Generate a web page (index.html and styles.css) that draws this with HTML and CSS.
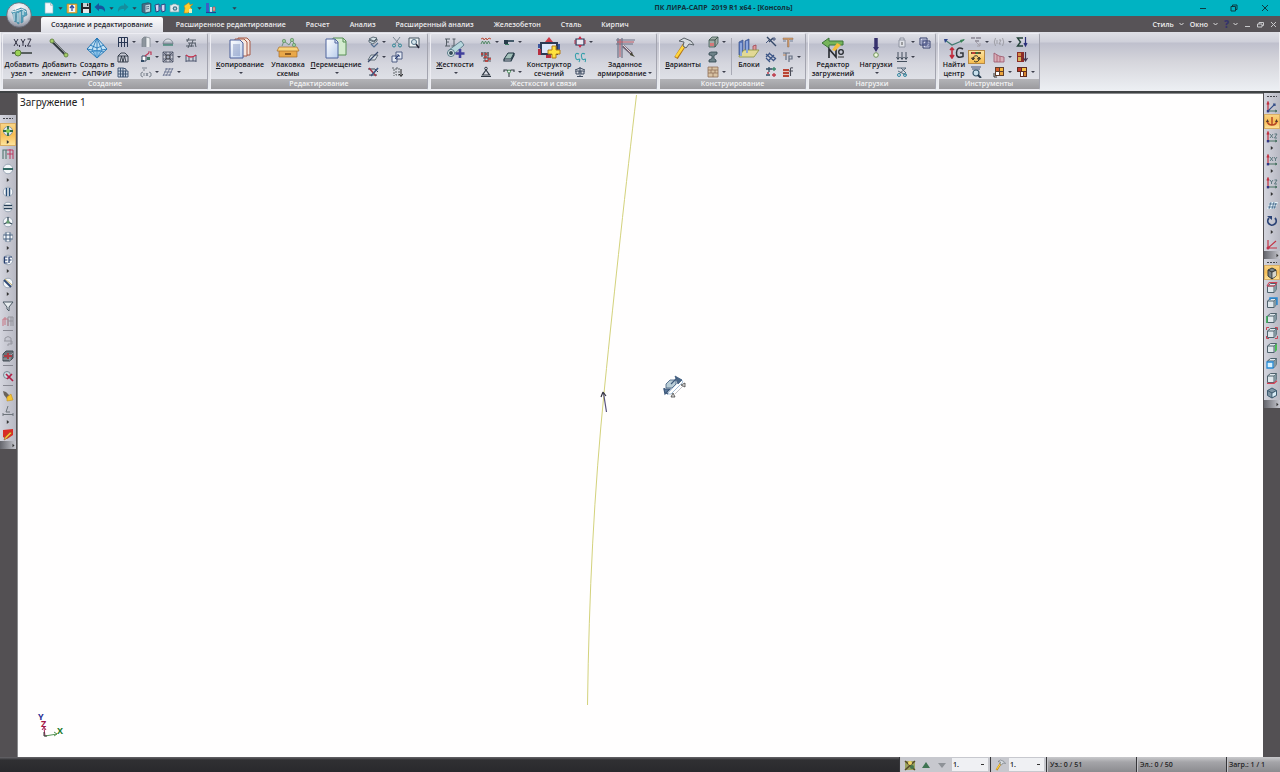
FILE: index.html
```
<!DOCTYPE html>
<html lang="ru">
<head>
<meta charset="utf-8">
<title>ПК ЛИРА-САПР 2019 R1 x64 - [Консоль]</title>
<link rel="stylesheet" href="styles.css">
</head>
<body>
<svg class="sprite" aria-hidden="true">
  <defs>
    <linearGradient id="gy" x1="0" y1="0" x2="0" y2="1"><stop offset="0" stop-color="#fff"/><stop offset="1" stop-color="#8b93a5"/></linearGradient>
    <linearGradient id="gb" x1="0" y1="0" x2="1" y2="1"><stop offset="0" stop-color="#fff"/><stop offset="1" stop-color="#b9cdec"/></linearGradient>
    <radialGradient id="orb" cx=".5" cy=".25" r=".8"><stop offset="0" stop-color="#fff"/><stop offset=".6" stop-color="#ccd0da"/><stop offset="1" stop-color="#7b7f8d"/></radialGradient>
  </defs>
  <symbol id="dd" viewBox="0 0 5 4"><path d="M.8 1h3.4L2.5 3z" fill="#333a4c"/></symbol>
  <symbol id="rt" viewBox="0 0 5 5"><path d="M1.5.8v3.4l2-1.7z" fill="#333"/></symbol>

  <symbol id="page" viewBox="0 0 12 12"><path d="M2 .8h5.8L10 3v8.2H2z" fill="#f4f7fb" stroke="#7fb2bd" stroke-width=".6"/><path d="M7.6.8v2.4H10" fill="none" stroke="#8aa" stroke-width=".7"/></symbol>
  <symbol id="open" viewBox="0 0 12 12"><path d="M1 2h10v9H1z" fill="#e9bd52" stroke="#b97e25" stroke-width=".7"/><path d="M3 3h6v7H3z" fill="#f6f7fb"/><path d="M6 9V4M4 6l2-2.4L8 6" fill="none" stroke="#2d4e9f" stroke-width="1.3"/></symbol>
  <symbol id="save" viewBox="0 0 12 12"><path d="M1 1h10v10H1z" fill="#25272c"/><path d="M3 1h6v4H3z" fill="#c6d2d6"/><path d="M3 7h6v4H3z" fill="#e6e9ec"/><path d="M7 1.5h1.3V4H7z" fill="#222"/></symbol>
  <symbol id="undo" viewBox="0 0 12 12"><path d="M.5 5L5 1v2.400c4.500-.2 6.500 2.200 6 6.600C9.600 7.500 8 7 5 7v2.200z" fill="#17549d"/></symbol>
  <symbol id="redo" viewBox="0 0 12 12"><path d="M11.500 5L7 1v2.400C2.500 3.200.5 5.600 1 10 2.400 7.500 4 7 7 7v2.200z" fill="#158d9d"/></symbol>
  <symbol id="book" viewBox="0 0 12 12"><path d="M2 2l6-1.300 3 1v8L5.500 11.300 2 10z" fill="#476c84" stroke="#29475b" stroke-width=".6"/><path d="M5.500 3.300L10 2.500v7l-4.500.8z" fill="#c2d6df"/><path d="M6 5l3-.6M6 7l3-.6" stroke="#31536b" stroke-width=".7"/></symbol>
  <symbol id="binoc" viewBox="0 0 12 12"><path d="M1 3l4-1v7L2 10zM7 3l4-1v7l-3 1z" fill="#d4d7ef" stroke="#2d4380" stroke-width="1"/><path d="M5 5h3v3H5z" fill="#536aaa"/></symbol>
  <symbol id="camera" viewBox="0 0 12 12"><path d="M2 3h2l1-1h3l1 1h2v7H2z" fill="#e3eaed" stroke="#6e9da8" stroke-width=".7"/><circle cx="7" cy="6.500" r="2.300" fill="#45798e"/><circle cx="7" cy="6.500" r="1" fill="#bfe2ed"/></symbol>
  <symbol id="flash" viewBox="0 0 12 12"><path d="M7 .5L2 4l1 2-1 5h4l4-4-2-2 3-3-3 1z" fill="#ffcd2d" stroke="#c58217" stroke-width=".6"/><path d="M7 7h3v4H7z" fill="#e8eec0"/></symbol>
  <symbol id="chart" viewBox="0 0 12 12"><path d="M1 1h3v9H1z" fill="#3c5fc5"/><path d="M5 5h2v5H5z" fill="#d7dcf1"/><path d="M8 5h2v4H8z" fill="#e3b9bd" stroke="#d14c37" stroke-width=".7"/><path d="M1 10.500h10" stroke="#263f91" stroke-width="1.200"/></symbol>

  <symbol id="frame" viewBox="0 0 12 12"><path d="M1.500 11V1.500h9V11M1.500 6.500h9M4.500 1.500V11M7.500 1.500V11" fill="none" stroke="#283653" stroke-width="1"/></symbol>
  <symbol id="truss" viewBox="0 0 12 12"><path d="M1 11V5L4 2h4l3 3v6zM1 5h10M3 11l1.500-6L6 11l1.500-6L9 11" fill="none" stroke="#2b3441" stroke-width=".9"/></symbol>
  <symbol id="building" viewBox="0 0 12 12"><path d="M1 2h5v9H1zM6 5h5v6H6zM1 5h5M1 8h10M3.500 2v9M8.500 5v6" fill="#c8d3e3" stroke="#38506f" stroke-width=".9"/><path d="M6 2l3 1v2" fill="none" stroke="#38506f"/></symbol>
  <symbol id="wall" viewBox="0 0 12 12"><path d="M2 3l2-2h2v10H2z" fill="#8d959d"/><path d="M6 1l4 1v9H6z" fill="#eceef0"/><path d="M2 3l2-2h2l4 1v9M2 3v8M6 1v10" fill="none" stroke="#777f87" stroke-width=".7"/></symbol>
  <symbol id="nodes" viewBox="0 0 12 12"><path d="M2 5h4v5H2z" fill="#fff" stroke="#32465c"/><path d="M7 6h3v3H7z" fill="#457866"/><path d="M5 5l4-3M8 1h3v3" fill="none" stroke="#bd3a57" stroke-width="1.200"/><path d="M1 9h3v2H1z" fill="#304a65"/></symbol>
  <symbol id="fx" viewBox="0 0 12 12"><path d="M2 2h5M3 4h2M3 6L1 7v3l2 1M9 6l2 1v3l-2 1M4 7v3M6 7l2 3M8 7l-2 3" fill="none" stroke="#737b87" stroke-width=".9"/></symbol>
  <symbol id="dome" viewBox="0 0 12 12"><path d="M1 8a5 5 0 0 1 10 0z" fill="url(#gy)" stroke="#65717c" stroke-width=".7"/><path d="M1 9h10" stroke="#37836f" stroke-width="1.300"/></symbol>
  <symbol id="mesh" viewBox="0 0 12 12"><path d="M1 1h10v10H1zM1 4h10M1 8h10M4 1v10M8 1v10M1 1l10 10M11 1L1 11" fill="none" stroke="#40475c" stroke-width=".8"/><circle cx="6" cy="6" r="2" fill="#a6adbf" stroke="#333" stroke-width=".8"/></symbol>
  <symbol id="slope" viewBox="0 0 12 12"><path d="M3 3h8M2 6h8M1 9h8M5 2L1 10M8 2L4 10M11 2L7 10" stroke="#66708d" stroke-width=".8"/></symbol>
  <symbol id="beam" viewBox="0 0 12 12"><path d="M1 3h10M3 6h8M1 9h8M4 1L2 5M8 3L6 10M5 6L3 11M10 6l1 4" fill="none" stroke="#4b525e" stroke-width=".9"/></symbol>
  <symbol id="span" viewBox="0 0 12 12"><path d="M1 10V3M11 10V3M1 9h10M4 9V5M8 9V5" stroke="#4e5970"/><path d="M1 3q5 4 10 0" fill="none" stroke="#c62e4b" stroke-width="1.300"/></symbol>

  <symbol id="layers" viewBox="0 0 12 12"><path d="M2 3l4-2 4 1-3 3zM2 4l5 2 3-3v2L6 8 2 6z" fill="#d6e2e7" stroke="#40505d" stroke-width=".8"/><path d="M4 8l3 3 4-4" fill="none" stroke="#526f92" stroke-width="1.200"/></symbol>
  <symbol id="cutplane" viewBox="0 0 12 12"><path d="M1 9l3-5h7L8 9z" fill="#dae1e8" stroke="#56636c" stroke-width=".9"/><path d="M1 11L11 1" stroke="#37486a" stroke-width="1.200"/></symbol>
  <symbol id="cross" viewBox="0 0 12 12"><path d="M1 3h7l3 3M2 9h8" fill="none" stroke="#3a4250"/><path d="M2 2l7 8" stroke="#a43648" stroke-width="1.500"/><path d="M11 2L4 10" stroke="#3c5680" stroke-width="1.700"/></symbol>
  <symbol id="scissors" viewBox="0 0 12 12"><path d="M2 1l6 7M9 1L4 8" stroke="#7a8794"/><circle cx="3" cy="9.500" r="1.500" fill="none" stroke="#298694"/><circle cx="9" cy="9.500" r="1.500" fill="none" stroke="#298694"/></symbol>
  <symbol id="resize" viewBox="0 0 12 12"><path d="M5 1h6v7H5zM1 5h5v6H1z" fill="#e3e8f2" stroke="#415179" stroke-width=".9"/><path d="M4 8l4-4M6 4h2v2" fill="none" stroke="#273b75"/></symbol>
  <symbol id="sort" viewBox="0 0 12 12"><path d="M1 2h2v8M5 2h3v7H5z" fill="none" stroke="#5f6468" stroke-dasharray="2 1"/><path d="M10 3v7M8 8l2 2.500L12 8" fill="none" stroke="#222"/></symbol>
  <symbol id="zoomframe" viewBox="0 0 12 12"><path d="M1 1h10v9H1z" fill="#edf2f4" stroke="#465461"/><circle cx="6" cy="5" r="2.500" fill="#d7e6ec" stroke="#527086"/><path d="M8 7l3 4" stroke="#223" stroke-width="1.500"/></symbol>

  <symbol id="support" viewBox="0 0 12 12"><path d="M1 3l2-1 1 2 2-2 1 2 2-2 2 1" fill="none" stroke="#bb503e"/><path d="M1 8l1.500-3L4 8l1.500-3L7 8l1.500-3L10 8" fill="none" stroke="#46825a" stroke-width=".9"/></symbol>
  <symbol id="springs" viewBox="0 0 12 12"><path d="M1 2h8M1 4h8M3 7h8M3 10h8M2 1v5M5 1v9M8 1v9" stroke="#3d3d42" stroke-width=".8"/><path d="M1 3h2M5 3h2M4 6h3M8 8h3M5 10h3" stroke="#c4332d" stroke-width="1.700"/></symbol>
  <symbol id="pin" viewBox="0 0 12 12"><circle cx="6" cy="2.500" r="1.300" fill="none" stroke="#303944"/><path d="M6 4L2.500 9h7zM1 10.500h10" fill="none" stroke="#303944" stroke-width="1.200"/></symbol>
  <symbol id="joint" viewBox="0 0 12 12"><path d="M1 4h4v4H1z" fill="#273b49"/><path d="M5 5h6" stroke="#455b6b" stroke-width="2"/><path d="M2 8.500h4" stroke="#3c7b61"/></symbol>
  <symbol id="plate" viewBox="0 0 12 12"><path d="M1 8l4-6h6L8 8z" fill="#a3c0ba" stroke="#1e3540"/><path d="M1 8v2h7l3-6V2" fill="none" stroke="#1e3540" stroke-width="1.200"/></symbol>
  <symbol id="fork" viewBox="0 0 12 12"><path d="M1 6V4h3l2 2 2-2h3v2M6 7v4" fill="none" stroke="#333b43" stroke-width="1.100"/><circle cx="6" cy="5.500" r="1.500" fill="#e7eeee" stroke="#384" stroke-width=".8"/></symbol>
  <symbol id="section" viewBox="0 0 12 12"><path d="M2 3h8v6H2z" fill="#e9e8f1" stroke="#273152" stroke-width="1.200"/><path d="M6 0L4 3h4zM6 12L4 9h4z" fill="#c52c48"/><path d="M1 4v4M11 4v4" stroke="#b2344c"/></symbol>
  <symbol id="cc" viewBox="0 0 12 12"><path d="M5 3Q1 1 1.500 5.500T5 8M11 3Q7 1 7.500 5.500T11 8M5 8q1.500 0 0 3M11 8q1.500 0 0 3" fill="none" stroke="#37a0ac" stroke-width="1.100"/></symbol>
  <symbol id="balance" viewBox="0 0 12 12"><path d="M6 1v10M1 4l5-2 5 2M2 5v3h3V5M7 5v3h3V5M3 10.500h6M1 5h10" fill="none" stroke="#3d4b60" stroke-width="1"/></symbol>

  <symbol id="block3d" viewBox="0 0 12 12"><path d="M2 4l3-3h6v6l-3 4H2z" fill="#9fada6" stroke="#4e6560" stroke-width=".9"/><path d="M2 4h6v7M8 4l3-3" fill="none" stroke="#334943" stroke-width=".9"/><path d="M3 7h4v3H3z" fill="#d47879"/></symbol>
  <symbol id="ibeam" viewBox="0 0 12 12"><path d="M2 2l2-1h6v2L7 4.500v3L9 9v2H2V9l3-1.500v-3L2 4z" fill="#6e8289" stroke="#31464f" stroke-width=".8"/></symbol>
  <symbol id="brick" viewBox="0 0 12 12"><path d="M1 1h10v10H1z" fill="#d9c3a4"/><path d="M1 1h10v10H1zM1 4h10M1 7h10M5 1v3M8 4v3M4 4v3M6 7v4" fill="none" stroke="#8f7059" stroke-width=".8"/></symbol>
  <symbol id="rebar" viewBox="0 0 12 12"><path d="M2 1l9 9M4 6l4-4" stroke="#344767" stroke-width="1.400"/><path d="M9 1v4M7 3h4M1 7l3-3" stroke="#47577d" stroke-width="1"/></symbol>
  <symbol id="rebars" viewBox="0 0 12 12"><path d="M1 3l8 7M4 2l7 6M1 7l4 4M1 6l4-4M4 9l5-5M8 10l3-3" stroke="#3c5586" stroke-width="1.200"/></symbol>
  <symbol id="plusminus" viewBox="0 0 12 12"><path d="M1 3h6M4 1v5M1 9h4" stroke="#2f4c63" stroke-width="1.300"/><path d="M7 3h4M9 1v4" stroke="#37846a" stroke-width="1.300"/><path d="M7 9h4M9 7v4M2 7h2" stroke="#bf3848" stroke-width="1.300"/></symbol>
  <symbol id="tee" viewBox="0 0 12 12"><path d="M1 2h10v1.500H7V11H5.500V3.500H1z" fill="#d99e66" stroke="#8b6a55" stroke-width=".5"/><path d="M1 5h3M8 5h3" stroke="#566b89" stroke-width=".8"/></symbol>
  <symbol id="tr" viewBox="0 0 12 12"><path d="M1 2h7M4 2v7M7 11V5h3v3H7" fill="none" stroke="#667082" stroke-width="1.200"/><path d="M1 4h3" stroke="#c1885a"/></symbol>
  <symbol id="redf" viewBox="0 0 12 12"><path d="M1 3h6v8H1z" fill="#b94434"/><path d="M1 5.500h6M1 8.500h6" stroke="#e3c4bb"/><path d="M11 2Q8 1 8.500 4v6M7 5h4" fill="none" stroke="#4a4d58" stroke-width="1.100"/></symbol>

  <symbol id="weight" viewBox="0 0 12 12"><path d="M3 4h6v7H3zM4 4V2h4v2" fill="#dfe1e7" stroke="#8a8f9c" stroke-width=".9"/><path d="M6 6v3" stroke="#555"/></symbol>
  <symbol id="arrows3" viewBox="0 0 12 12"><path d="M2 1v7M6 1v7M10 1v7M.500 6L2 8.500 3.500 6M4.500 6L6 8.500 7.500 6M8.500 6l1.500 2.500L11.500 6M1 10.500h10" fill="none" stroke="#33404e" stroke-width=".9"/></symbol>
  <symbol id="cutload" viewBox="0 0 12 12"><path d="M1 2h9L3 8M2 5l8 4M5 2l5 5" fill="none" stroke="#4c6173" stroke-width=".9"/><circle cx="3" cy="9" r="1.500" fill="none" stroke="#348aa4"/><circle cx="9" cy="9" r="1.500" fill="none" stroke="#348aa4"/></symbol>
  <symbol id="copyload" viewBox="0 0 12 12"><path d="M1 1h7v7H1zM4 4h7v7H4z" fill="#d9dbed" stroke="#353f6c"/><path d="M3 3h4v4H3zM6 6h4v3H6z" fill="none" stroke="#4b578b" stroke-width=".8"/></symbol>
  <symbol id="flag" viewBox="0 0 12 12"><path d="M1 1h4v2H1zM6 1h5v2H6zM5 4h4v2H5z" fill="#9d9aa6"/><path d="M6 6l4 4M10 7v3H7" fill="none" stroke="#a4a0aa"/></symbol>
  <symbol id="rotate" viewBox="0 0 12 12"><path d="M1 1h10v2H1z" fill="#6a522b"/><path d="M2 1h3v2H2z" fill="#bf413a"/><path d="M6 1h2v2H6z" fill="#397642"/><path d="M3 8a3 3 0 0 1 5-2.500M9 7a3 3 0 0 1-5 3M1.500 7h3L3 9zM7.500 8h3L9 6z" fill="none" stroke="#282822" stroke-width=".9"/></symbol>
  <symbol id="zoommodel" viewBox="0 0 12 12"><path d="M1 1h10M2 3h8" stroke="#43537a" stroke-width="1.200"/><circle cx="6" cy="7" r="3" fill="#c9e0ec" stroke="#34566a" stroke-width="1.200"/><path d="M8 9l3 3" stroke="#283d50" stroke-width="2"/></symbol>
  <symbol id="dim" viewBox="0 0 12 12"><path d="M2.500 2Q0 6 2.500 10M9.500 2q2.500 4 0 8M4 4v4M6 4h2L6 8h2" fill="none" stroke="#98999f" stroke-width=".9"/></symbol>
  <symbol id="epure" viewBox="0 0 12 12"><path d="M1 2v9h10V6L6 5z" fill="#d8afb9" stroke="#99546b" stroke-width=".8"/><path d="M4 4v7M7 5v6" stroke="#a95a6b" stroke-width=".8"/></symbol>
  <symbol id="mosaic" viewBox="0 0 12 12"><path d="M2 1h9v9H2z" fill="#613f2b"/><path d="M3 2h3v3H3z" fill="#d45b28"/><path d="M7 2h3v3H7z" fill="#f5b83f"/><path d="M3 6h3v3H3z" fill="#fff"/><path d="M7 6h3v3H7z" fill="#e9a33b"/><path d="M1 7v4h3" fill="none" stroke="#333"/></symbol>
  <symbol id="sigma" viewBox="0 0 12 12"><path d="M7 2H1.500l3 4-3 4H7" fill="none" stroke="#25433a" stroke-width="1.400"/><path d="M9.500 1v8M8 7l1.500 3L11 7" fill="none" stroke="#292e79" stroke-width="1.200"/></symbol>
  <symbol id="redgrid" viewBox="0 0 12 12"><path d="M1 1h7v10H1z" fill="#8d2d28"/><path d="M2 2h3v3H2z" fill="#d38c43"/><path d="M2 6h3v4H2z" fill="#d2b55a"/><path d="M9.500 1v8M7.500 7l2 3 2-3" fill="none" stroke="#42334b" stroke-width="1.200"/></symbol>
  <symbol id="mosaic2" viewBox="0 0 12 12"><path d="M1 1h10v5H1zM4 6h7v5H4z" fill="#5f2b21"/><path d="M2 2h3v3H2z" fill="#c33729"/><path d="M6 2h4v3H6z" fill="#f7c348"/><path d="M5 6h2v4H5z" fill="#fff"/><path d="M8 6h2v4H8z" fill="#d9852d"/></symbol>

  <symbol id="bnode" viewBox="0 0 24 22"><path d="M4 2l4 7M8 2L4 9M11 2l2 3.500L15 2M13 5v4M17.500 2H21l-3.500 7H21M9.500 8v2M15.500 8v2" fill="none" stroke="#334" stroke-width="1"/><path d="M2 16h20" stroke="#3b4542" stroke-width="1.600"/><circle cx="8" cy="16" r="3" fill="#9bd256" stroke="#5b813a"/></symbol>
  <symbol id="belem" viewBox="0 0 24 22"><path d="M5 4l14 14" stroke="#333b40" stroke-width="3"/><path d="M6 4l13 13" stroke="#8b928f"/><circle cx="5" cy="4" r="2" fill="#a4ce66" stroke="#6b8a4b"/><circle cx="19" cy="18" r="2" fill="#a4ce66" stroke="#6b8a4b"/></symbol>
  <symbol id="bsapfir" viewBox="0 0 24 22"><path d="M12 1L2 12l10 9 10-9z" fill="#c4e2f5" stroke="#2478b5"/><path d="M2 12l10 2 10-2M12 1L7 13l5 8 5-8zM5 8l7 3 7-3M5 15l7-1 7 1M12 1v20" fill="none" stroke="#2476b7" stroke-width=".9"/><path d="M7 13l5 1 5-1-5 8z" fill="#67aee0" opacity=".6"/></symbol>
  <symbol id="bcopy" viewBox="0 0 24 22"><path d="M10 1h9l3 3v14H10z" fill="#f5e6dd" stroke="#a55846"/><path d="M7 2h9l3 3v14H7z" fill="#f6e8e0" stroke="#a55846"/><path d="M2 3h10l3 3v15H2z" fill="url(#gb)" stroke="#4a5e99"/><path d="M5 8h7M5 10h7M5 12h7M5 14h7M5 16h7M5 18h7" stroke="#7485b5" stroke-width=".8"/></symbol>
  <symbol id="bpack" viewBox="0 0 24 22"><path d="M3 13h18v7H3z" fill="#e9a849" stroke="#a76c25" stroke-width=".7"/><path d="M3 10h18l2 4H1z" fill="#f8d37b" stroke="#a76c25" stroke-width=".7"/><path d="M9 17h6" stroke="#8a5921" stroke-width="2"/><path d="M6 9l2-5 5 4 3-5 3 5" fill="none" stroke="#6d9678"/><circle cx="8" cy="4" r="1.700" fill="#9bcb98" stroke="#56835b" stroke-width=".6"/><circle cx="16" cy="3" r="1.700" fill="#9bcb98" stroke="#56835b" stroke-width=".6"/><circle cx="18" cy="8" r="1.700" fill="#9bcb98" stroke="#56835b" stroke-width=".6"/></symbol>
  <symbol id="bmove" viewBox="0 0 24 22"><path d="M9 1h10l3 3v14H9z" fill="#d3ebcf" stroke="#589056"/><path d="M19 1v4h3" fill="none" stroke="#589056"/><path d="M2 2h9l3 3v16H2z" fill="url(#gb)" stroke="#4f659e"/><path d="M11 2v4h3" fill="none" stroke="#4f659e"/></symbol>
  <symbol id="bstiff" viewBox="0 0 24 22"><path d="M2 2h5M3 5h3M2 9h5M3.500 2v7M11 2v7M9.500 2h3M8.500 9h4" stroke="#555d66" fill="none"/><path d="M6 13L18 4l3 4L10 18z" fill="#b7d6dd" stroke="#4d6f7c" stroke-width=".8"/><circle cx="8" cy="16" r="3.500" fill="#e8f2f3" stroke="#507582"/><circle cx="8" cy="16" r="2" fill="#344d59"/><path d="M17 12v9M12.500 16.500h9" stroke="#41409c" stroke-width="2.600"/></symbol>
  <symbol id="bconstr" viewBox="0 0 24 22"><path d="M4 6h16v11H4z" fill="#dce6fb" stroke="#2d3a55" stroke-width="2"/><path d="M12 0L8 5h8z" fill="#ce3947"/><path d="M1 12h3v6H1zM9 18h5v3H9z" fill="#b72e40"/><path d="M1 7h2v4H1zM21 7h2v6h-2z" fill="#3a559c"/><path d="M15 9h4v4h4v4h-4v4h-4v-4h-4v-4h4z" fill="#ffe23f" stroke="#b47d19"/></symbol>
  <symbol id="barm" viewBox="0 0 24 22"><path d="M3 3h19M3 7h17M5 1v20M9 1v20" stroke="#6e7286" stroke-width="1.200"/><path d="M4 5h17M7 2v18" stroke="#bb4854" stroke-width=".9"/><path d="M10 9l9 8" stroke="#6d6375" stroke-width="3"/><path d="M10 8l9 9" stroke="#ead3d1"/><path d="M18 15l4 5-5-2z" fill="#443"/></symbol>
  <symbol id="hammer" viewBox="0 0 24 22"><path d="M14 7L5 21" stroke="#b27517" stroke-width="4"/><path d="M14 7L5 20" stroke="#ffd53c" stroke-width="2.500"/><path d="M8 4l5-3 7 3 3 4-5-1-3 4-3-2 1-4z" fill="#d6dbe0" stroke="#5b6269"/></symbol>
  <symbol id="bblocks" viewBox="0 0 24 22"><path d="M2 5l4-2v15H2zM8 4l4-2v14H8z" fill="#5978bd" stroke="#344d87" stroke-width=".7"/><path d="M16 9l3-1v8h-3z" fill="#dd9b9b" stroke="#9b3646" stroke-width=".7"/><path d="M2 19l5-6h15l-5 7H2z" fill="#e2d995" stroke="#899242" stroke-width=".8"/><path d="M4 6v13M10 4v12" stroke="#8ba6dd" stroke-width="2"/></symbol>
  <symbol id="bedit" viewBox="0 0 24 22"><path d="M1 6l7-5v3h14v4H8v3z" fill="#76b45a" stroke="#3b7539"/><path d="M8 21V12l7 8v-8" fill="none" stroke="#25292e" stroke-width="1.600"/><circle cx="20" cy="15" r="2.300" fill="none" stroke="#25292e" stroke-width="1.300"/><path d="M17 20h6" stroke="#333"/><path d="M11 13l5-7 4 2-6 6z" fill="#f5bd3e"/></symbol>
  <symbol id="bload" viewBox="0 0 24 22"><path d="M12 1v10" stroke="#36316d" stroke-width="3.500"/><path d="M9 10h6l-3 5z" fill="#36316d"/><circle cx="12" cy="18" r="2.300" fill="#eef8df" stroke="#70945a"/></symbol>
  <symbol id="bfind" viewBox="0 0 24 22"><path d="M3 3l7 5 12-5" fill="none" stroke="#417b70" stroke-width="1.200"/><path d="M2 2h4L3 6z" fill="#2e448c"/><path d="M23 2l-4 4-1-3z" fill="#388255"/><path d="M10 11v10M8 13l2-2 2 2M8 18l2 3 2-3" fill="none" stroke="#c12c3c" stroke-width="1.600"/><path d="M21 12q-6-3-6.500 3.500T21 19.500V16h-3" fill="none" stroke="#30343a" stroke-width="1.500"/></symbol>

  <symbol id="sel" viewBox="0 0 12 12"><circle cx="6" cy="6" r="4.500" fill="#e0e8ef" stroke="#70808c" stroke-width=".7"/><path d="M6 1v10M1 6h10" stroke="#2d6c48" stroke-width="1.800"/><circle cx="6" cy="6" r="2" fill="#85cf4e"/></symbol>
  <symbol id="selframe" viewBox="0 0 12 12"><path d="M1 11V2h4M4 11V2" fill="none" stroke="#537670" stroke-width="1.100"/><path d="M5 2h6v9M8 1v10M5 6h6" fill="none" stroke="#bd3a60" stroke-width="1"/></symbol>
  <symbol id="disc" viewBox="0 0 12 12"><circle cx="6" cy="6" r="4.800" fill="#f4f7fa" stroke="#8b99aa" stroke-width=".8"/></symbol>
  <symbol id="sh" viewBox="0 0 12 12"><use href="#disc"/><path d="M1 6h10" stroke="#346b66" stroke-width="2"/></symbol>
  <symbol id="sv2" viewBox="0 0 12 12"><use href="#disc"/><path d="M4.500 2v8M7.500 2v8" stroke="#274e78" stroke-width="1.500"/></symbol>
  <symbol id="sh2" viewBox="0 0 12 12"><use href="#disc"/><path d="M2 4.500h8M2 7.500h8" stroke="#263f57" stroke-width="1.400"/></symbol>
  <symbol id="sy" viewBox="0 0 12 12"><use href="#disc"/><path d="M6 1v5l4 2M6 6L2 8" fill="none" stroke="#364b5a" stroke-width="1.300"/><circle cx="6" cy="6" r="1.700" fill="#659f71"/></symbol>
  <symbol id="sgrid" viewBox="0 0 12 12"><use href="#disc"/><path d="M4 1.500v9M8 1.500v9M1.500 4h9M1.500 8h9" stroke="#425d7d"/></symbol>
  <symbol id="sef" viewBox="0 0 12 12"><use href="#disc"/><path d="M5.500 3h-3v6h3M2.500 6h2.800M10 3H7v6M7 6h2.500" fill="none" stroke="#273e6f" stroke-width="1.200"/></symbol>
  <symbol id="sbrush" viewBox="0 0 12 12"><use href="#disc"/><path d="M2 3l7 7" stroke="#304a75" stroke-width="2"/><path d="M3 2l7 6" stroke="#c3ae65"/></symbol>
  <symbol id="funnel" viewBox="0 0 12 12"><path d="M1 2h10L7 7v4L5 9V7z" fill="#e8edf0" stroke="#4b5964"/></symbol>
  <symbol id="fadedframe" viewBox="0 0 12 12"><path d="M1 11V4h5v7M3 2v8" fill="none" stroke="#c77583"/><path d="M6 11V2h5v9M6 6h5M9 2v9" fill="none" stroke="#93939b"/></symbol>
  <symbol id="lock" viewBox="0 0 12 12"><path d="M2 6h8v3H6v2M3 6V3q3-3 6 0v6" fill="none" stroke="#9697a0"/></symbol>
  <symbol id="darkbox" viewBox="0 0 12 12"><path d="M1 4l3-3h7v7l-3 3H1z" fill="#697178" stroke="#434d55"/><path d="M1 6h7l3-3M1 9h7M8 4v7" stroke="#b5b8bd" fill="none" stroke-width=".7"/><path d="M2 5h8v2H2zM5 3h2v6H5z" fill="#ad3b43"/></symbol>
  <symbol id="zoomx" viewBox="0 0 12 12"><circle cx="5" cy="5" r="3.500" fill="#cadbe2" stroke="#788893"/><path d="M4 4l7 7M10 4l-5 5" stroke="#b51f46" stroke-width="1.700"/></symbol>
  <symbol id="torch" viewBox="0 0 12 12"><path d="M1 1l3 1 5 5-3 3-4-5z" fill="#6a635d"/><path d="M5 7l4-3 2 6-6 1z" fill="#f6c431" stroke="#c29023" stroke-width=".6"/></symbol>
  <symbol id="level" viewBox="0 0 12 12"><path d="M6 1L4 7h4M1 9.500h10M1 8v3M11 8v3" fill="none" stroke="#6e757c"/></symbol>
  <symbol id="redpen" viewBox="0 0 12 12"><path d="M1 2l10-1v6l-6 4-4-2z" fill="#d92c25"/><path d="M10 5l-6 6-2 1 1-3 5-5z" fill="#f2b737" stroke="#8a5120" stroke-width=".5"/></symbol>

  <symbol id="ax" viewBox="0 0 12 12"><path d="M2 10V2M1 3.500L2 1l1 2.500" fill="none" stroke="#c1303f" stroke-width="1.200"/><path d="M2 10h9M9 9l2 1-2 1" fill="none" stroke="#477160"/><path d="M.800 9h2.400v2.400H.800z" fill="#333684"/></symbol>
  <symbol id="iso" viewBox="0 0 12 12"><use href="#ax"/><path d="M2 10l7-7M7 3h2v2" fill="none" stroke="#334d87" stroke-width="1.200"/></symbol>
  <symbol id="isored" viewBox="0 0 12 12"><path d="M2 10V2M2 10h9M2 10l8-7" stroke="#c33546" stroke-width="1.200"/><circle cx="2" cy="10" r="1.500" fill="#bd334c"/></symbol>
  <symbol id="proj" viewBox="0 0 12 12"><path d="M6 1v8M1 5q1 4 5 4t5-4" fill="none" stroke="#b84924" stroke-width="1.500"/><path d="M0 6l1.500-3L3 6zM9 6l1.500-3L12 6z" fill="#59382b"/></symbol>
  <symbol id="xz" viewBox="0 0 12 12"><use href="#ax"/><path d="M4 3l3 4M7 3L4 7M8.500 3H11L8.500 7H11" fill="none" stroke="#537077" stroke-width=".9"/></symbol>
  <symbol id="xy" viewBox="0 0 12 12"><use href="#ax"/><path d="M4 3l3 4M7 3L4 7M8 3l1.500 2L11 3M9.500 5v2" fill="none" stroke="#537077" stroke-width=".9"/></symbol>
  <symbol id="yz" viewBox="0 0 12 12"><use href="#ax"/><path d="M4 3l1.500 2L7 3M5.500 5v2M8.500 3H11L8.500 7H11" fill="none" stroke="#537077" stroke-width=".9"/></symbol>
  <symbol id="planeg" viewBox="0 0 12 12"><path d="M1 9l3-7h8L9 9z" fill="#e4f3fa"/><path d="M2 7h8M3 4h8M5 2L3 9M8 2L6 9M10 3L8 9" stroke="#426688" stroke-width=".8"/></symbol>
  <symbol id="turn" viewBox="0 0 12 12"><path d="M3 3a4.200 4.200 0 1 0 6 0" fill="none" stroke="#2b4376" stroke-width="1.800"/><path d="M1 1h5v4z" fill="#2b4376"/></symbol>
  <symbol id="cube" viewBox="0 0 12 12"><path d="M1.500 4l3-2.500h6v6L8 10.500H1.500z" fill="#dfe7ec" stroke="#4f626d"/><path d="M1.500 4H8v6.500M8 4l2.500-2.500" fill="none" stroke="#4f626d"/><path d="M8 4l2.500-2.500v6L8 10.500z" fill="#81959f"/></symbol>
  <symbol id="cubedark" viewBox="0 0 12 12"><path d="M2 3l4-2 4 2v6l-4 3-4-3z" fill="#7b8589" stroke="#32393d"/><path d="M2 3l4 2v7M6 5l4-2" fill="none" stroke="#333"/><path d="M6.500 5.500L10 4v5l-3.500 2z" fill="#d8d6cb"/></symbol>
  <symbol id="ctop" viewBox="0 0 12 12"><use href="#cube"/><path d="M1 4l2-3.500h8L8.500 4z" fill="none" stroke="#d34055" stroke-width="1"/></symbol>
  <symbol id="cback" viewBox="0 0 12 12"><use href="#cube"/><path d="M4 3V1h7v7" fill="none" stroke="#298bd6" stroke-width="1.500"/></symbol>
  <symbol id="cleft" viewBox="0 0 12 12"><use href="#cube"/><path d="M1 4v7" stroke="#39a655" stroke-width="1.700"/></symbol>
  <symbol id="ccorner" viewBox="0 0 12 12"><use href="#cube"/><path d="M.500 3V.5H3M9 .5h2.500V3M.500 9v2.500H3M9 11.500h2.500V9" fill="none" stroke="#c94455"/></symbol>
  <symbol id="cright" viewBox="0 0 12 12"><use href="#cube"/><path d="M9 3l2-1v6l-2 2z" fill="#49bd52"/></symbol>
  <symbol id="cfront" viewBox="0 0 12 12"><use href="#cube"/><path d="M1 5h6v6H1z" fill="#d7f2ff" stroke="#298bd6" stroke-width="1.300"/></symbol>
  <symbol id="cbottom" viewBox="0 0 12 12"><use href="#cube"/><path d="M1 11.300h7l3-2.500" fill="none" stroke="#d34055" stroke-width="1.300"/></symbol>
  <symbol id="chex" viewBox="0 0 12 12"><path d="M6 1l4.500 2.500v5L6 11 1.500 8.500v-5z" fill="#8096a6" stroke="#3c5b70"/><path d="M6 6v5M1.500 3.500L6 6l4.500-2.500" fill="none" stroke="#3c5b70"/><path d="M6.500 6.500L10 4.500V8L6.500 10z" fill="#d8edf7"/></symbol>
</svg>

<div class="app">
  <header class="titlebar">
    <nav class="quick" aria-label="Панель быстрого доступа">
      <button aria-label="Новый"><svg><use href="#page"/></svg></button><button class="drop" aria-label="Новый: варианты"><svg><use href="#dd"/></svg></button>
      <button aria-label="Открыть"><svg><use href="#open"/></svg></button>
      <button aria-label="Сохранить"><svg><use href="#save"/></svg></button>
      <button aria-label="Отменить"><svg><use href="#undo"/></svg></button><button class="drop" aria-label="Список отмены"><svg><use href="#dd"/></svg></button>
      <button aria-label="Повторить"><svg><use href="#redo"/></svg></button><button class="drop" aria-label="Список повтора"><svg><use href="#dd"/></svg></button>
      <button aria-label="Документ"><svg><use href="#book"/></svg></button>
      <button aria-label="Поиск"><svg><use href="#binoc"/></svg></button>
      <button aria-label="Снимок"><svg><use href="#camera"/></svg></button>
      <button aria-label="Расчет"><svg><use href="#flash"/></svg></button><button class="drop" aria-label="Варианты расчета"><svg><use href="#dd"/></svg></button>
      <button aria-label="Результаты"><svg><use href="#chart"/></svg></button>
      <button class="drop last" aria-label="Настроить панель"><svg><use href="#dd"/></svg></button>
    </nav>
    <h1 class="title">ПК ЛИРА-САПР&nbsp; 2019 R1 x64 - [Консоль]</h1>
    <div class="winctl">
      <button aria-label="Свернуть"><svg viewBox="0 0 8 8"><path d="M1 4.500h6"/></svg></button>
      <button aria-label="Восстановить"><svg viewBox="0 0 8 8"><path d="M1 2.500h4.500V7H1zM2.500 2.500V1H7v4.500H5.500"/></svg></button>
      <button aria-label="Закрыть"><svg viewBox="0 0 8 8"><path d="M1 1l6 6M7 1L1 7"/></svg></button>
    </div>
    <button class="orb" aria-label="Меню приложения"><svg viewBox="0 0 26 26"><circle cx="13" cy="13" r="12.300" fill="url(#orb)" stroke="#5f626d" stroke-width=".8"/><path d="M5 10l4-2 1 12-2-1-1-7zM10 8l5-2v3l-2 1v12l-2-1zM15 6l5 2 1 5-4 2v5l-2 1z" fill="#5aa5be" stroke="#3b7f9b" stroke-width=".7"/><path d="M5 10l5-1 6-2 4 3M8 11v8M12 11v9M17 9v4" fill="none" stroke="#e1eff4"/></svg></button>
  </header>

  <div class="tabs">
    <nav class="tablist" aria-label="Вкладки ленты">
      <button class="tab active">Создание и редактирование</button>
      <button class="tab">Расширенное редактирование</button>
      <button class="tab">Расчет</button>
      <button class="tab">Анализ</button>
      <button class="tab">Расширенный анализ</button>
      <button class="tab">Железобетон</button>
      <button class="tab">Сталь</button>
      <button class="tab">Кирпич</button>
    </nav>
    <div class="tabtools">
      <button>Стиль <svg class="chev" viewBox="0 0 5 4"><path d="M.500 1l2 2 2-2"/></svg></button>
      <button>Окно <svg class="chev" viewBox="0 0 5 4"><path d="M.500 1l2 2 2-2"/></svg></button>
      <button class="help"><b>?</b><svg class="chev" viewBox="0 0 5 4"><path d="M.500 1l2 2 2-2"/></svg></button>
      <button aria-label="Свернуть окно"><svg class="mdi" viewBox="0 0 7 7"><path d="M1 5.500h5"/></svg></button>
      <button aria-label="Восстановить окно"><svg class="mdi" viewBox="0 0 7 7"><path d="M.500 3h4.500v3H.500zM2 3V1.500h4.500v3H5"/></svg></button>
      <button aria-label="Закрыть окно"><svg class="mdi" viewBox="0 0 7 7"><path d="M1 1l5 5M6 1L1 6"/></svg></button>
    </div>
  </div>

  <section class="ribbon" aria-label="Лента">
    <section class="panel p-create">
      <div class="tools">
        <button class="big w38"><svg><use href="#bnode"/></svg><span>Добавить<br>узел<i></i></span></button>
        <button class="big w38"><svg><use href="#belem"/></svg><span>Добавить<br>элемент<i></i></span></button>
        <button class="big w38"><svg><use href="#bsapfir"/></svg><span>Создать в<br>САПФИР</span></button>
        <div class="col">
          <button class="sm dr" aria-label="Рама"><svg><use href="#frame"/></svg></button>
          <button class="sm" aria-label="Ферма"><svg><use href="#truss"/></svg></button>
          <button class="sm" aria-label="Пространственный каркас"><svg><use href="#building"/></svg></button>
        </div>
        <div class="col">
          <button class="sm dr" aria-label="Стена"><svg><use href="#wall"/></svg></button>
          <button class="sm dr" aria-label="Узлы"><svg><use href="#nodes"/></svg></button>
          <button class="sm dr" aria-label="Функция"><svg><use href="#fx"/></svg></button>
        </div>
        <div class="col">
          <button class="sm" aria-label="Купол"><svg><use href="#dome"/></svg></button>
          <button class="sm dr" aria-label="Сеть"><svg><use href="#mesh"/></svg></button>
          <button class="sm dr" aria-label="Плита"><svg><use href="#slope"/></svg></button>
        </div>
        <div class="col">
          <button class="sm" aria-label="Балка"><svg><use href="#beam"/></svg></button>
          <button class="sm" aria-label="Мост"><svg><use href="#span"/></svg></button>
        </div>
      </div>
      <h2>Создание</h2>
    </section>

    <section class="panel p-edit">
      <div class="tools">
        <button class="big w48"><svg><use href="#bcopy"/></svg><span><u>К</u>опирование<br><i></i></span></button>
        <button class="big w48"><svg><use href="#bpack"/></svg><span>Упаковка<br>схемы</span></button>
        <button class="big w48"><svg><use href="#bmove"/></svg><span><u>П</u>еремещение<br><i></i></span></button>
        <div class="col gapl">
          <button class="sm dr" aria-label="Слои"><svg><use href="#layers"/></svg></button>
          <button class="sm dr" aria-label="Сечение плоскостью"><svg><use href="#cutplane"/></svg></button>
          <button class="sm" aria-label="Пересечение"><svg><use href="#cross"/></svg></button>
        </div>
        <div class="col narrow">
          <button class="sm" aria-label="Вырезать"><svg><use href="#scissors"/></svg></button>
          <button class="sm" aria-label="Масштабировать"><svg><use href="#resize"/></svg></button>
          <button class="sm" aria-label="Перенумеровать"><svg><use href="#sort"/></svg></button>
        </div>
        <div class="col narrow">
          <button class="sm" aria-label="Показать фрагмент"><svg><use href="#zoomframe"/></svg></button>
        </div>
      </div>
      <h2>Редактирование</h2>
    </section>

    <section class="panel p-stiff">
      <div class="tools">
        <button class="big w48"><svg><use href="#bstiff"/></svg><span><u>Ж</u>есткости<br><i></i></span></button>
        <div class="col">
          <button class="sm dr" aria-label="Связи"><svg><use href="#support"/></svg></button>
          <button class="sm" aria-label="Пружины"><svg><use href="#springs"/></svg></button>
          <button class="sm" aria-label="Опора"><svg><use href="#pin"/></svg></button>
        </div>
        <div class="col">
          <button class="sm dr" aria-label="Вставка"><svg><use href="#joint"/></svg></button>
          <button class="sm" aria-label="Пластина"><svg><use href="#plate"/></svg></button>
          <button class="sm dr" aria-label="Шарнир"><svg><use href="#fork"/></svg></button>
        </div>
        <button class="big w48"><svg><use href="#bconstr"/></svg><span>Конструктор<br>сечений</span></button>
        <div class="col">
          <button class="sm dr" aria-label="Сечение"><svg><use href="#section"/></svg></button>
          <button class="sm" aria-label="Коэффициенты"><svg><use href="#cc"/></svg></button>
          <button class="sm" aria-label="Баланс"><svg><use href="#balance"/></svg></button>
        </div>
        <button class="big w58"><svg><use href="#barm"/></svg><span>Заданное<br>армирование<i></i></span></button>
      </div>
      <h2>Жесткости и связи</h2>
    </section>

    <section class="panel p-design">
      <div class="tools">
        <button class="big w46"><svg><use href="#hammer"/></svg><span><u>В</u>арианты</span></button>
        <div class="col">
          <button class="sm dr" aria-label="Железобетон"><svg><use href="#block3d"/></svg></button>
          <button class="sm" aria-label="Сталь"><svg><use href="#ibeam"/></svg></button>
          <button class="sm dr" aria-label="Кирпич"><svg><use href="#brick"/></svg></button>
        </div>
        <div class="vsep"></div>
        <button class="big w30"><svg><use href="#bblocks"/></svg><span>Блоки</span></button>
        <div class="col narrow">
          <button class="sm" aria-label="Стержень"><svg><use href="#rebar"/></svg></button>
          <button class="sm" aria-label="Сетка арматуры"><svg><use href="#rebars"/></svg></button>
          <button class="sm" aria-label="Добавить или удалить"><svg><use href="#plusminus"/></svg></button>
        </div>
        <div class="col">
          <button class="sm" aria-label="Тавр"><svg><use href="#tee"/></svg></button>
          <button class="sm dr" aria-label="Тавр переменный"><svg><use href="#tr"/></svg></button>
          <button class="sm" aria-label="Параметры"><svg><use href="#redf"/></svg></button>
        </div>
      </div>
      <h2>Конструирование</h2>
    </section>

    <section class="panel p-load">
      <div class="tools">
        <button class="big w48"><svg><use href="#bedit"/></svg><span>Редактор<br>загружений</span></button>
        <button class="big w38"><svg><use href="#bload"/></svg><span>Нагрузки<br><i></i></span></button>
        <div class="col">
          <button class="sm dr" aria-label="Собственный вес"><svg><use href="#weight"/></svg></button>
          <button class="sm dr" aria-label="Распределенная нагрузка"><svg><use href="#arrows3"/></svg></button>
          <button class="sm" aria-label="Удалить нагрузку"><svg><use href="#cutload"/></svg></button>
        </div>
        <div class="col narrow">
          <button class="sm" aria-label="Копировать загружение"><svg><use href="#copyload"/></svg></button>
        </div>
      </div>
      <h2>Нагрузки</h2>
    </section>

    <section class="panel p-tools">
      <div class="tools">
        <button class="big w30"><svg><use href="#bfind"/></svg><span>Найти<br>центр</span></button>
        <div class="col">
          <button class="sm dr" aria-label="Флаги"><svg><use href="#flag"/></svg></button>
          <button class="sm on" aria-label="Вращение"><svg><use href="#rotate"/></svg></button>
          <button class="sm" aria-label="Просмотр"><svg><use href="#zoommodel"/></svg></button>
        </div>
        <div class="col">
          <button class="sm dr" aria-label="Размеры"><svg><use href="#dim"/></svg></button>
          <button class="sm dr" aria-label="Эпюра"><svg><use href="#epure"/></svg></button>
          <button class="sm dr" aria-label="Мозаика"><svg><use href="#mosaic"/></svg></button>
        </div>
        <div class="col">
          <button class="sm" aria-label="Сумма нагрузок"><svg><use href="#sigma"/></svg></button>
          <button class="sm" aria-label="Мозаика нагрузок"><svg><use href="#redgrid"/></svg></button>
          <button class="sm dr" aria-label="Мозаика свойств"><svg><use href="#mosaic2"/></svg></button>
        </div>
      </div>
      <h2>Инструменты</h2>
    </section>
  </section>

  <div class="work">
    <aside class="side left" aria-label="Выбор">
      <div class="bar">
        <div class="grip"></div>
        <button class="on" aria-label="Отметка узлов"><svg><use href="#sel"/></svg><svg class="more"><use href="#rt"/></svg></button>
        <button aria-label="Отметка элементов"><svg><use href="#selframe"/></svg></button>
        <button aria-label="Отметка горизонтальных узлов"><svg><use href="#sh"/></svg><svg class="more"><use href="#rt"/></svg></button>
        <button aria-label="Вертикальные стержни"><svg><use href="#sv2"/></svg></button>
        <button aria-label="Горизонтальные стержни"><svg><use href="#sh2"/></svg></button>
        <button aria-label="Стержни вдоль оси"><svg><use href="#sy"/></svg></button>
        <button aria-label="Отметка блока"><svg><use href="#sgrid"/></svg><svg class="more"><use href="#rt"/></svg></button>
        <button aria-label="Отметка по жесткости"><svg><use href="#sef"/></svg><svg class="more"><use href="#rt"/></svg></button>
        <button aria-label="Отмена отметки"><svg><use href="#sbrush"/></svg><svg class="more"><use href="#rt"/></svg></button>
        <button aria-label="Полифильтр"><svg><use href="#funnel"/></svg></button>
        <button aria-label="Фрагментация"><svg><use href="#fadedframe"/></svg></button>
        <hr>
        <button aria-label="Восстановить схему"><svg><use href="#lock"/></svg></button>
        <button aria-label="Отсечение"><svg><use href="#darkbox"/></svg></button>
        <hr>
        <button aria-label="Отмена масштаба"><svg><use href="#zoomx"/></svg></button>
        <hr>
        <button aria-label="Флаги рисования"><svg><use href="#torch"/></svg></button>
        <button aria-label="Размеры"><svg><use href="#level"/></svg><svg class="more"><use href="#rt"/></svg></button>
        <button aria-label="Цвета"><svg><use href="#redpen"/></svg></button>
        <div class="cap"><svg><use href="#rt"/></svg></div>
      </div>
    </aside>

    <main class="canvas">
      <p class="case">Загружение 1</p>
      <svg class="scene" viewBox="0 0 1245 663" aria-label="Расчетная схема">
        <path d="M618.500 1C608 90 597 190 586.500 294S571 500 569.500 611" fill="none" stroke="#d3d27c" stroke-width="1"/>
        <path d="M588.500 318l-3-19" fill="none" stroke="#55507c" stroke-width="1.200"/><path d="M585 298l-2 5M585 298l3 4" stroke="#33333f" stroke-width="1.200"/>
        <g stroke="#3f5a7c" stroke-width=".8"><path d="M649 300l14-15 2 3-12 12z" fill="#fff" stroke="#8fb0cf"/><path d="M657 282l7 4-4 4zM646 294l4 6-3-1z" fill="#4a6787"/><path d="M648 290l4-4h6v4l-4 4h-6z" fill="#b9cdd6"/><path d="M646 295h6l-5 5zM653 290l6-6" fill="#5a7799" stroke-width="1.200"/><path d="M657 300l8-8" fill="none" stroke="#b5b5bb"/><path d="M653 303l2-4 2 4zM667 289v4l-4-2z" fill="#ddd" stroke="#444"/></g>
        <path d="M27 642l-1-8M24 636l2-3 2 3" fill="none" stroke="#a32657"/><path d="M27 642l12-2M36 638l3 2-3 2" fill="none" stroke="#579557"/><path d="M26 638v4h3" fill="none" stroke="#333"/>
        <g class="axes"><text x="20" y="626" fill="#2a2f93">Y</text><text x="23" y="633" fill="#a51847">Z</text><text x="39" y="640" fill="#247c2b">X</text></g>
      </svg>
    </main>

    <aside class="side right" aria-label="Проекции">
      <div class="bar">
        <div class="grip"></div>
        <button aria-label="Изометрия"><svg><use href="#iso"/></svg></button>
        <button class="on" aria-label="Пространственный вид"><svg><use href="#proj"/></svg></button>
        <button aria-label="Проекция XZ"><svg><use href="#xz"/></svg><svg class="more"><use href="#rt"/></svg></button>
        <button aria-label="Проекция XY"><svg><use href="#xy"/></svg><svg class="more"><use href="#rt"/></svg></button>
        <button aria-label="Проекция YZ"><svg><use href="#yz"/></svg><svg class="more"><use href="#rt"/></svg></button>
        <button aria-label="На плоскость"><svg><use href="#planeg"/></svg></button>
        <button aria-label="Поворот"><svg><use href="#turn"/></svg><svg class="more"><use href="#rt"/></svg></button>
        <button aria-label="Диметрия"><svg><use href="#isored"/></svg></button>
        <div class="cap"><svg><use href="#rt"/></svg></div>
      </div>
      <div class="bar">
        <div class="grip"></div>
        <button class="on" aria-label="Объем"><svg><use href="#cubedark"/></svg></button>
        <button aria-label="Вид сверху"><svg><use href="#ctop"/></svg></button>
        <button aria-label="Вид сзади"><svg><use href="#cback"/></svg></button>
        <button aria-label="Вид слева"><svg><use href="#cleft"/></svg></button>
        <button aria-label="Весь объем"><svg><use href="#ccorner"/></svg></button>
        <button aria-label="Вид справа"><svg><use href="#cright"/></svg></button>
        <button aria-label="Вид спереди"><svg><use href="#cfront"/></svg></button>
        <button aria-label="Вид снизу"><svg><use href="#cbottom"/></svg></button>
        <button aria-label="3D вид"><svg><use href="#chex"/></svg></button>
        <div class="cap"><svg><use href="#rt"/></svg></div>
      </div>
    </aside>
  </div>

  <footer class="status">
    <div class="loads">
      <button aria-label="Загружения"><svg viewBox="0 0 12 12"><path d="M1 2h10v9H1z" fill="#9aa35f"/><path d="M1 2l10 9M11 2L1 11" stroke="#564a2b" stroke-width="1.500"/><circle cx="6" cy="4" r="2" fill="#efd668"/><circle cx="8" cy="8" r="2" fill="#45754c"/></svg></button>
      <button aria-label="Следующее"><svg viewBox="0 0 12 12"><path d="M6 3l4 6H2z" fill="#3f7452"/></svg></button>
      <button aria-label="Предыдущее"><svg viewBox="0 0 12 12"><path d="M2 4h8L6 9z" fill="#8e9297"/></svg></button>
      <select aria-label="Номер загружения"><option>1.</option></select>
    </div>
    <div class="variants">
      <button aria-label="Вариант"><svg><use href="#hammer"/></svg></button>
      <select aria-label="Номер варианта"><option>1.</option></select>
    </div>
    <div class="count">Уз.: 0 / 51</div>
    <div class="count">Эл.: 0 / 50</div>
    <div class="count short">Загр.: 1 / 1</div>
  </footer>
</div>
</body>
</html>
```
FILE: styles.css
```
* { box-sizing: border-box; }
body { margin: 0; font: 600 7px/9px "Open Sans", "Noto Sans", sans-serif; color: #16161c; background: #535053; }
button { padding: 0; border: 0; background: none; font: inherit; color: inherit; white-space: nowrap; }
h1, h2, p { margin: 0; }
svg { display: block; }
.sprite { position: absolute; width: 0; height: 0; }
.app { display: flex; flex-direction: column; min-height: 100vh; }

.titlebar { position: relative; display: flex; align-items: center; height: 16px; background: #00b3c2; }
.quick { display: flex; align-items: center; width: 260px; padding-left: 43px; gap: 2px; }
.quick svg { width: 12px; height: 12px; }
.quick .drop svg { width: 7px; height: 5px; }
.quick .last { margin-left: 12px; }
.title { flex: 1; text-align: center; font-size: 7px; line-height: 16px; font-weight: 700; color: #10303a; }
.winctl { display: flex; width: 93px; }
.winctl button { display: flex; flex: 1; justify-content: center; }
.winctl svg { width: 8px; height: 8px; fill: none; stroke: #0d3b41; stroke-width: 1; }
.orb { position: absolute; left: 6px; top: 2px; z-index: 2; }
.orb svg { width: 26px; height: 26px; }

.tabs { display: flex; justify-content: space-between; height: 16px; padding-left: 41px; background: #575357; }
.tablist { display: flex; padding-top: 1px; }
.tab { padding: 0 10px; color: #ececee; line-height: 15px; }
.tab.active { margin-right: 3px; background: linear-gradient(#fbfbfc, #dfe0e7); color: #24242e; border-radius: 2px 2px 0 0; }
.tabtools { display: flex; align-items: center; gap: 6px; padding-right: 3px; color: #f0f0f0; }
.tabtools button { display: flex; align-items: center; gap: 5px; }
.tabtools .help { gap: 4px; color: #35356a; font-size: 10px; }
.chev { width: 5px; height: 4px; fill: none; stroke: #ddd; }
.mdi { width: 7px; height: 7px; fill: none; stroke: #c9c9cc; stroke-width: 1; }

.ribbon { display: flex; gap: 2px; padding: 1px 1px 0; border: 1px solid #eeeef2; border-width: 0 1px 1px; background: linear-gradient(#dedfe6, #cfd0da 10px, #bfc0cd 11px, #d6d6dc 30px, #eceff3); }
.panel { display: flex; flex-direction: column; border: 1px solid #ededf3; border-right-color: #a3a4af; border-radius: 2px; background: linear-gradient(#dfe0e7, #cccdd8 9px, #bdbfcd 10px, #d5d6de 30px, #e5e7ec); }
.p-create { width: 206px; }
.p-edit { width: 218px; }
.p-stiff { width: 227px; }
.p-design { width: 147px; }
.p-load { width: 128px; }
.p-tools { width: 102px; }
.tools { display: flex; height: 45px; }
.p-edit .tools { padding-left: 5px; }
.panel h2 { height: 10px; line-height: 10px; font-size: 7px; font-weight: 600; text-align: center; color: #f4f4f4; background: linear-gradient(#b3b3b7, #9b9a9e); }
.big { display: flex; flex-direction: column; align-items: center; padding-top: 3px; gap: 1px; }
.big svg { width: 24px; height: 22px; }
.big i { display: inline-block; width: 0; height: 0; margin: 0 0 2px 2px; border: 2px solid transparent; border-top-color: #3c3f4c; border-bottom-width: 0; }
.w30 { width: 30px; }
.w38 { width: 38px; }
.w46 { width: 46px; }
.w48 { width: 48px; }
.w58 { width: 58px; }
.col { display: flex; flex-direction: column; width: 23px; padding-top: 1px; }
.col.narrow { width: 17px; }
.gapl { margin-left: 6px; width: 24px; }
.sm { display: flex; align-items: center; width: 100%; height: 15px; padding-left: 1px; }
.sm svg { width: 12px; height: 12px; }
.sm.dr::after { content: ""; margin-left: 3px; border: 2px solid transparent; border-top-color: #3c3f4c; border-bottom-width: 0; }
.sm.on { width: 17px; margin-left: -1px; background: linear-gradient(#fce3a0, #f6bd51); border: 1px solid #b88a45; }
.vsep { width: 1px; margin: 4px 2px; background: #a9aab5; }

.work { display: flex; flex: 1; border-top: 2px solid #3f4244; background: #535053; }
.side { width: 17px; }
.left { padding: 22px 1px 0 0; }
.right { padding-left: 1px; }
.bar { display: flex; flex-direction: column; align-items: stretch; background: linear-gradient(90deg, #d4d5de, #b8b9c3); }
.bar button { display: flex; flex-direction: column; align-items: center; padding-top: 1px; }
.bar button svg { width: 12px; height: 14px; }
.bar button .more { width: 6px; height: 8px; }
.bar .on { background: linear-gradient(#f8d78b, #f7bd54 50%, #fde7a2); box-shadow: inset 0 0 0 1px #d9ae65; }
.grip { height: 6px; margin: 0 3px; background: repeating-linear-gradient(90deg, #44454c 0 2px, transparent 2px 3px) center 3px / 100% 1px no-repeat; }
.left .grip { height: 8px; }
.bar hr { width: 10px; height: 1px; margin: 2px auto; border: 0; background: #878892; }
.cap { display: flex; justify-content: flex-end; align-items: center; height: 8px; background: linear-gradient(90deg, #65666d, #c7c8cf); }
.cap svg { width: 5px; height: 5px; }
.canvas { position: relative; flex: 1; display: flex; background: #fffefe; border: 1px solid #8b8c8e; border-width: 1px 0 0 1px; }
.case { position: absolute; left: 2px; top: 3px; font: 400 10px/10px "Noto Sans", sans-serif; color: #222; }
.scene { flex: 1; min-width: 0; width: 100%; }
.axes { font: bold 9px "Noto Sans", sans-serif; }

.status { display: flex; justify-content: flex-end; height: 15px; background: linear-gradient(#67666a, #303033 3px, #29292d); color: #1f1f24; line-height: 15px; }
.status > div { display: flex; align-items: center; border-left: 1px solid #353539; box-shadow: inset 1px 0 #c4c4c8; background: linear-gradient(#c9c9cc, #a5a5a9 5px, #8c8c90); }
.status .loads { width: 91px; padding-left: 4px; gap: 4px; background: #c7c8ce; }
.status .variants { width: 56px; padding-left: 3px; gap: 3px; background: #c7c8ce; }
.status svg { width: 12px; height: 12px; }
.status select { flex: 1; min-width: 0; height: 13px; margin-right: 2px; padding: 0 1px; appearance: none; border: 0; border-radius: 0; font: 600 7px/13px "Open Sans", "Noto Sans", sans-serif; color: #222; background: linear-gradient(#333, #333) right 4px center / 3px 1px no-repeat, #eff0f3; }
.status .count { width: 90px; padding-left: 3px; }
.status .short { width: 54px; padding-left: 2px; }
```
